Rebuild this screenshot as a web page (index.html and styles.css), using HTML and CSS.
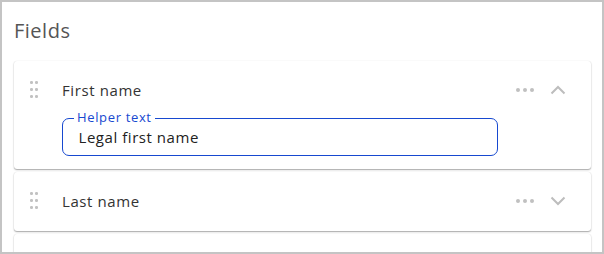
FILE: index.html
```html
<!DOCTYPE html>
<html>
<head>
<meta charset="utf-8">
<link rel="stylesheet" href="styles.css">
</head>
<body>
<div class="frame">
  <h1 class="title">Fields</h1>
  <div class="list">
    <div class="card">
      <div class="card-head">
        <span class="grip"><i></i><i></i><i></i><i></i><i></i><i></i></span>
        <span class="name">First name</span>
        <span class="more"><i></i><i></i><i></i></span>
        <svg class="chev" width="16" height="10" viewBox="0 0 16 10"><path d="M1.5 8.5 L8 2 L14.5 8.5" fill="none" stroke="#bdbdbd" stroke-width="2"/></svg>
      </div>
      <div class="card-body">
        <div class="input">
          <span class="input-label">Helper text</span>
          <span class="input-value">Legal first name</span>
        </div>
      </div>
    </div>
    <div class="card">
      <div class="card-head tall">
        <span class="grip"><i></i><i></i><i></i><i></i><i></i><i></i></span>
        <span class="name">Last name</span>
        <span class="more"><i></i><i></i><i></i></span>
        <svg class="chev" width="16" height="10" viewBox="0 0 16 10"><path d="M1.5 1.5 L8 8 L14.5 1.5" fill="none" stroke="#bdbdbd" stroke-width="2"/></svg>
      </div>
    </div>
    <div class="card stub"></div>
  </div>
</div>
</body>
</html>
```

FILE: styles.css
```css
html, body {
  margin: 0;
  padding: 0;
  background: #fff;
}
.frame {
  box-sizing: border-box;
  width: 604px;
  height: 254px;
  border: 2px solid #c4c4c4;
  padding: 17px 11px 0 12px;
  overflow: hidden;
  font-family: "Open Sans", "Liberation Sans", sans-serif;
  background: #fff;
}
.title {
  margin: 0 0 18px 0;
  font-size: 20px;
  line-height: 24px;
  font-weight: 400;
  letter-spacing: 0.5px;
  color: #555;
}
.list {
  display: flex;
  flex-direction: column;
  gap: 3px;
}
.card {
  background: #fff;
  border-radius: 3px;
  box-shadow: 0 1px 1.5px rgba(0,0,0,0.35), 0 0 1px rgba(0,0,0,0.12);
}
.card-head {
  height: 57px;
  display: flex;
  align-items: center;
  padding: 0 25px 0 16px;
}
.card-head.tall {
  height: 59px;
  padding-bottom: 2px;
  box-sizing: border-box;
}
.grip {
  display: grid;
  grid-template-columns: 3px 3px;
  grid-auto-rows: 3px;
  column-gap: 2px;
  row-gap: 4px;
  width: 8px;
  margin-right: 24px;
}
.grip i {
  display: block;
  width: 2.5px;
  height: 2.5px;
  border-radius: 50%;
  background: #c2c2c2;
}
.name {
  flex: 1;
  font-size: 15px;
  letter-spacing: 0.6px;
  color: #333;
}
.more {
  display: flex;
  gap: 3px;
  margin-right: 16px;
}
.more i {
  display: block;
  width: 4px;
  height: 4px;
  border-radius: 50%;
  background: #c0c0c0;
}
.chev {
  display: block;
}
.card-body {
  padding: 0 93px 13px 48px;
}
.input {
  position: relative;
  height: 38px;
  box-sizing: border-box;
  border: 1.5px solid #1749d0;
  border-radius: 7px;
  display: flex;
  align-items: center;
  padding-left: 15.5px;
}
.input-label {
  position: absolute;
  left: 11px;
  top: -10px;
  padding: 0 3px;
  background: #fff;
  font-size: 13px;
  line-height: 16px;
  letter-spacing: 0.65px;
  color: #1749d0;
}
.input-value {
  font-size: 15px;
  letter-spacing: 0.55px;
  color: #222;
}
.stub {
  height: 40px;
}
```
